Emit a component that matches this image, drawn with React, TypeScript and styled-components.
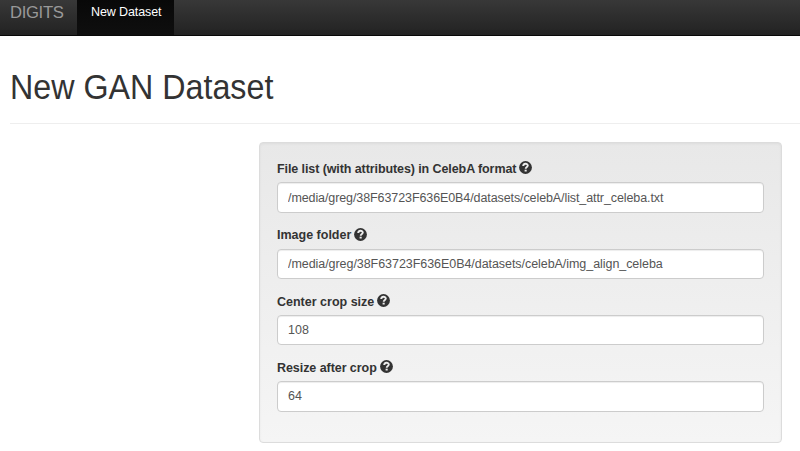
import React from "react";
import styled, { createGlobalStyle } from "styled-components";

const GlobalStyle = createGlobalStyle`
  *, *::before, *::after { box-sizing: border-box; }
  body {
    margin: 0;
    overflow: hidden;
    background: #fff;
    color: #333;
    font: 13px/18.57px "Liberation Sans", Arial, sans-serif;
  }
`;

const Navbar = styled.nav`
  display: flex;
  height: 36px;
  overflow: hidden;
  background: linear-gradient(#383838, #222);
  border-bottom: 1px solid #080808;
`;

const Brand = styled.a`
  width: 77px;
  padding: 3px 0 0 10px;
  font-size: 16.7px;
  line-height: 19px;
  letter-spacing: -0.35px;
  color: #999;
`;

const NavItem = styled.a`
  width: 97px;
  padding: 3px 0 0 14px;
  font-size: 12.5px;
  line-height: 18px;
  letter-spacing: -0.1px;
  color: #fff;
  background: linear-gradient(#080808, #0f0f0f);
`;

const PageHeader = styled.header`
  height: 88px;
  margin-left: 10px;
  padding-top: 32px;
  border-bottom: 1px solid #eee;
`;

const Title = styled.h1`
  margin: 0;
  font-size: 35px;
  font-weight: 400;
  line-height: 38px;
  transform: scaleX(0.921);
  transform-origin: left;
`;

const Well = styled.form`
  width: 523px;
  height: 301px;
  margin: 18px 0 0 259px;
  padding: 17.3px 17px 0;
  background: linear-gradient(#e8e8e8, #f5f5f5);
  border: 1px solid #dcdcdc;
  border-radius: 4px;
  box-shadow: inset 0 1px 3px rgba(0, 0, 0, 0.05), 0 1px 0 rgba(255, 255, 255, 0.1);
`;

const Field = styled.div`
  height: 66.3px;
`;

const Label = styled.label<{ $tracking: number }>`
  display: flex;
  height: 18px;
  margin-bottom: 4.1px;
  align-items: center;
  gap: 3px;
  font-size: 12.5px;
  font-weight: 700;
  letter-spacing: ${(p) => p.$tracking}px;
`;

const Help = styled.svg`
  width: 13px;
  height: 13px;
  flex: none;
  margin-bottom: 3px;
`;

const Input = styled.input<{ $tracking: number }>`
  display: block;
  width: 100%;
  height: 30.4px;
  padding: 5px 10px;
  font: 12.5px/18px "Liberation Sans", Arial, sans-serif;
  letter-spacing: ${(p) => p.$tracking}px;
  color: #555;
  background: #fff;
  border: 1px solid #ccc;
  border-radius: 4px;
  box-shadow: inset 0 1px 1px rgba(0, 0, 0, 0.075);
`;

const fields = [
  { id: "files", label: "File list (with attributes) in CelebA format", labelTracking: -0.09, value: "/media/greg/38F63723F636E0B4/datasets/celebA/list_attr_celeba.txt", tracking: -0.095 },
  { id: "folder", label: "Image folder", labelTracking: 0, value: "/media/greg/38F63723F636E0B4/datasets/celebA/img_align_celeba", tracking: -0.055 },
  { id: "crop", label: "Center crop size", labelTracking: 0, value: "108", tracking: 0 },
  { id: "resize", label: "Resize after crop", labelTracking: -0.06, value: "64", tracking: 0 },
];

function HelpIcon() {
  return (
    <Help viewBox="0 0 13 13" aria-hidden="true">
      <circle cx="6.5" cy="6.5" r="6.4" fill="#333" />
      <path d="M4.2 5.1C4.2 2 8.8 2 8.8 4.6C8.8 6 6.7 6 6.7 7.8" fill="none" stroke="#ededed" strokeWidth="1.9" />
      <path d="M5.6 8.7h2.1v1.8H5.6z" fill="#ededed" />
    </Help>
  );
}

export default function App() {
  return (
    <>
      <GlobalStyle />
      <Navbar>
        <Brand>DIGITS</Brand>
        <NavItem>New Dataset</NavItem>
      </Navbar>
      <main>
        <PageHeader><Title>New GAN Dataset</Title></PageHeader>
        <Well>
          {fields.map((f) => (
            <Field key={f.id}>
              <Label htmlFor={f.id} $tracking={f.labelTracking}>{f.label}<HelpIcon /></Label>
              <Input id={f.id} defaultValue={f.value} $tracking={f.tracking} spellCheck={false} />
            </Field>
          ))}
        </Well>
      </main>
    </>
  );
}
